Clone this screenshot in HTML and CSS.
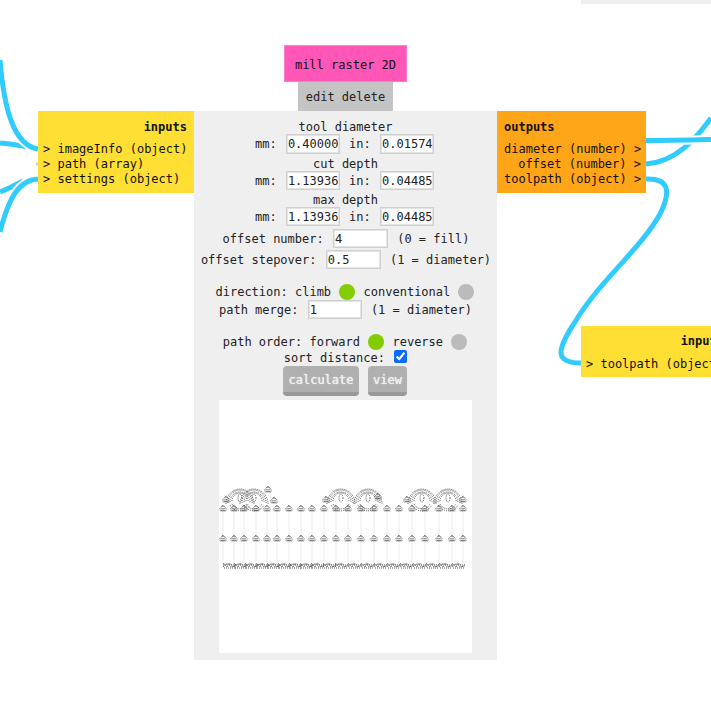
FILE: index.html
```html
<!DOCTYPE html>
<html lang="en">
<head>
<meta charset="utf-8">
<title>mill raster 2D</title>
<link rel="stylesheet" href="styles.css">
</head>
<body>
<main class="canvas">
  <svg class="wires" width="711" height="720" viewBox="0 0 711 720" aria-hidden="true">
    <path class="halo" d="M0 143 C10 144 20 146 30 148"/>
    <path class="wire" d="M0 143 C10 144 18 145 27 147"/>
    <path class="wire" d="M0 192 C8 189 15 185 23 181"/>
    <path class="halo" d="M0 60 C4 110 14 145 38 149"/>
    <path class="wire" d="M0 60 C4 110 14 145 38 149"/>
    <path class="halo" d="M0 232 C8 200 18 180 38 179"/>
    <path class="wire" d="M0 232 C8 200 18 180 38 179"/>
    <path class="wire-thin" d="M36 164 L38 164"/>
    <path class="wire" d="M646 164 C675 162 695 140 711 118"/>
    <path class="halo" d="M660 140.5 C680 140.5 695 140 711 139.5"/>
    <path class="wire" d="M646 140.5 C670 140.5 690 140 711 139.5"/>
    <path class="wire" d="M646 179 C668 178 672 190 660 214 C640 250 600 280 575 322 C555 352 556 363 581 363"/>
  </svg>

  <div class="tab">
    <div class="tab-name">mill raster 2D</div>
  </div>
  <div class="tab-actions">edit delete</div>

  <section class="ports ports-in">
    <h2 class="ports-title">inputs</h2>
    <div class="port">&gt; imageInfo (object)</div>
    <div class="port">&gt; path (array)</div>
    <div class="port">&gt; settings (object)</div>
  </section>

  <section class="panel">
    <div class="label">tool diameter</div>
    <div class="row row-20">mm: <input class="num" value="0.40000"> in: <input class="num" value="0.01574"></div>
    <div class="label">cut depth</div>
    <div class="row">mm: <input class="num" value="1.13936"> in: <input class="num" value="0.04485"></div>
    <div class="label">max depth</div>
    <div class="row">mm: <input class="num" value="1.13936"> in: <input class="num" value="0.04485"></div>
    <div class="row gap-3 nudge">offset number: <input class="w-55" value="4"> (0 = fill)</div>
    <div class="row gap-2 nudge">offset stepover: <input class="w-55" value="0.5"> (1 = diameter)</div>
    <div class="row row-16 gap-15">direction: climb <span class="dot on"></span> conventional <span class="dot"></span></div>
    <div class="row">path merge: <input class="w-54" value="1"> (1 = diameter)</div>
    <div class="row row-16 gap-15">path order: forward <span class="dot on"></span> reverse <span class="dot"></span></div>
    <div class="row row-16">sort distance: <input class="check" type="checkbox" checked></div>
    <div class="buttons">
      <button class="btn btn-calc" type="button">calculate</button>
      <button class="btn btn-view" type="button">view</button>
    </div>
    <svg class="preview" width="253" height="253" viewBox="0 0 253 253" aria-hidden="true">
      <defs>
        <filter id="soft" x="-5%" y="-5%" width="110%" height="110%"><feGaussianBlur stdDeviation="0.55"/></filter>
        <g id="blob"><path class="tp" d="M-3.5 1 L0 -3 L3.5 1 M-3.5 2 H3.5 M-1 -2 V3.5 M1 -2 V3.5 M-2.5 3 H2.5"/></g>
        <g id="low"><path class="tp" d="M-6 -2 L-2 2 L1 -2 L4 2 L7 -1 M-6 2 L-1 -2 L2 2 L7 1 M-6 0 H7 M-5 3 H6"/></g>
        <g id="ring">
          <ellipse class="tp" cx="0" cy="0" rx="2" ry="4"/>
          <path class="tp" d="M-8 3 A8 8 0 0 1 8 3 M-10 4 A10 10 0 0 1 10 4 M-12 5 A12 13 0 0 1 12 5 M-14 6 A14 15 0 0 1 14 6 M-8 6 A9 9 0 0 0 8 6 M-10 7 A11 10 0 0 0 10 7"/>
        </g>
      </defs>
      <g filter="url(#soft)">
        <path class="lines" d="M4 108V165M15 108V165M25 108V165M37 108V165M48 108V165M58 108V165M70 108V165M82 108V165M93 108V165M105 108V165M117 108V165M129 108V165M142 108V165M155 108V165M168 108V165M180 108V165M193 108V165M206 108V165M220 108V165M233 108V165M244 108V165"/>
        <use href="#ring" x="21" y="98"/><use href="#ring" x="35" y="98"/>
        <use href="#ring" x="122" y="98"/><use href="#ring" x="149" y="98"/>
        <use href="#ring" x="203" y="98"/><use href="#ring" x="229" y="98"/>
        <use href="#blob" x="7" y="99"/><use href="#blob" x="49" y="89"/><use href="#blob" x="55" y="100"/>
        <use href="#blob" x="107" y="99"/><use href="#blob" x="159" y="96"/>
        <use href="#blob" x="188" y="99"/><use href="#blob" x="244" y="99"/>

        <use href="#blob" x="4" y="108"/><use href="#blob" x="15" y="108"/><use href="#blob" x="25" y="108"/><use href="#blob" x="37" y="108"/><use href="#blob" x="48" y="108"/><use href="#blob" x="58" y="108"/><use href="#blob" x="70" y="108"/><use href="#blob" x="82" y="108"/><use href="#blob" x="93" y="108"/><use href="#blob" x="105" y="108"/><use href="#blob" x="117" y="108"/><use href="#blob" x="129" y="108"/><use href="#blob" x="142" y="108"/><use href="#blob" x="155" y="108"/><use href="#blob" x="168" y="108"/><use href="#blob" x="180" y="108"/><use href="#blob" x="193" y="108"/><use href="#blob" x="206" y="108"/><use href="#blob" x="220" y="108"/><use href="#blob" x="233" y="108"/><use href="#blob" x="244" y="108"/>

        <use href="#blob" x="4" y="138"/><use href="#blob" x="15" y="138"/><use href="#blob" x="25" y="138"/><use href="#blob" x="37" y="138"/><use href="#blob" x="48" y="138"/><use href="#blob" x="58" y="138"/><use href="#blob" x="70" y="138"/><use href="#blob" x="82" y="138"/><use href="#blob" x="93" y="138"/><use href="#blob" x="105" y="138"/><use href="#blob" x="117" y="138"/><use href="#blob" x="129" y="138"/><use href="#blob" x="142" y="138"/><use href="#blob" x="155" y="138"/><use href="#blob" x="168" y="138"/><use href="#blob" x="180" y="138"/><use href="#blob" x="193" y="138"/><use href="#blob" x="206" y="138"/><use href="#blob" x="220" y="138"/><use href="#blob" x="233" y="138"/><use href="#blob" x="244" y="138"/>

        <use href="#low" x="10" y="165"/><use href="#low" x="21" y="165"/><use href="#low" x="32" y="165"/><use href="#low" x="43" y="165"/><use href="#low" x="54" y="165"/><use href="#low" x="65" y="165"/><use href="#low" x="76" y="165"/><use href="#low" x="87" y="165"/><use href="#low" x="98" y="165"/><use href="#low" x="110" y="165"/><use href="#low" x="122" y="165"/><use href="#low" x="135" y="165"/><use href="#low" x="148" y="165"/><use href="#low" x="161" y="165"/><use href="#low" x="174" y="165"/><use href="#low" x="187" y="165"/><use href="#low" x="200" y="165"/><use href="#low" x="213" y="165"/><use href="#low" x="226" y="165"/><use href="#low" x="239" y="165"/>
      </g>
    </svg>
  </section>

  <section class="ports ports-out">
    <h2 class="ports-title">outputs</h2>
    <div class="port">diameter (number) &gt;</div>
    <div class="port">offset (number) &gt;</div>
    <div class="port">toolpath (object) &gt;</div>
  </section>

  <section class="ports ports-next">
    <h2 class="ports-title">inputs</h2>
    <div class="port">&gt; toolpath (object)</div>
  </section>

  <div class="stub"></div>
</main>
</body>
</html>
```
FILE: styles.css
```css
* { box-sizing: border-box; }

html, body {
  margin: 0;
  padding: 0;
  background: #fff;
  overflow: hidden;
}

.canvas {
  position: relative;
  width: 711px;
  height: 720px;
  overflow: hidden;
  font-family: "DejaVu Sans Mono", monospace;
  font-size: 12px;
  color: #111;
}

.wires {
  position: absolute;
  left: 0;
  top: 0;
}

.wire, .halo, .wire-thin {
  fill: none;
  stroke-linecap: butt;
}

.wire { stroke: #30ccff; stroke-width: 5; }
.halo { stroke: #fff; stroke-width: 9; }
.wire-thin { stroke: #9fe5ff; stroke-width: 3; }

.tab {
  position: absolute;
  left: 284px;
  top: 45px;
  width: 123px;
  height: 37px;
  padding-top: 2px;
  display: flex;
  align-items: center;
  justify-content: center;
  background: #ff56b8;
  border: 1px solid #ff7ecb;
}

.tab-actions {
  position: absolute;
  left: 298px;
  top: 82px;
  width: 95px;
  height: 29px;
  display: flex;
  align-items: center;
  justify-content: center;
  background: #c4c4c4;
  color: #222;
}

.ports {
  position: absolute;
  padding: 9px 7px 0 5px;
  line-height: 15px;
}

.port { white-space: pre; }

.ports-title {
  margin: 0 0 7px;
  font-size: 12px;
  line-height: 15px;
  font-weight: bold;
  text-align: right;
}

.ports-in, .ports-next {
  background: #ffdf33;
}

.ports-in {
  left: 38px;
  top: 111px;
  width: 156px;
  height: 82px;
}

.ports-next {
  left: 581px;
  top: 326px;
  width: 150px;
  height: 51px;
  padding-top: 8px;
}

.ports-next .ports-title { margin-bottom: 8px; }

.ports-out {
  left: 497px;
  top: 111px;
  width: 149px;
  height: 82px;
  padding: 9px 5px 0 7px;
  background: #ffa518;
  text-align: right;
}

.ports-out .ports-title { text-align: left; }

.panel {
  position: absolute;
  left: 194px;
  top: 111px;
  width: 303px;
  height: 549px;
  padding: 6px 0 7px;
  display: flex;
  flex-direction: column;
  align-items: center;
  background: #efefef;
  color: #222;
}

.label {
  height: 17px;
  line-height: 20px;
  text-align: center;
}

.row {
  height: 19px;
  display: flex;
  align-items: center;
  justify-content: center;
  white-space: pre;
}

.row-20 { height: 20px; }
.row-16 { height: 16px; }
.gap-2 { margin-top: 2px; }
.gap-3 { margin-top: 3px; }
.gap-15 { margin-top: 15px; }
.nudge { margin-left: 1px; }

input {
  margin: 0 2px;
  font: 12px "DejaVu Sans Mono", monospace;
  color: #222;
  background: #fff;
  border: 1px solid #cfcfcf;
  box-shadow: inset 0 0 0 1px #e4e4e4;
  border-radius: 0;
  padding: 0 0 0 1px;
  height: 100%;
}

.num { width: 54px; }
.w-55 { width: 55px; }
.w-54 { width: 54px; }

.check {
  width: 13px;
  height: 13px;
  margin: 0 0 3px 2px;
  padding: 0;
  border: 0;
  box-shadow: none;
  accent-color: #0a6cff;
}

.dot {
  display: inline-block;
  width: 16px;
  height: 16px;
  margin: 0 1px;
  border-radius: 50%;
  background: #bbb;
}

.dot.on { background: #83cc00; }

.buttons {
  display: flex;
  gap: 9px;
  height: 30px;
  margin-right: 1px;
}

.btn {
  height: 30px;
  padding: 2px 0 0;
  border: 0;
  border-bottom: 4px solid #999;
  border-radius: 4px;
  background: #b0b0b0;
  color: #f0f0f0;
  font: 12px "DejaVu Sans Mono", monospace;
  text-shadow: 0 0 1px #fff;
}

.btn-calc { width: 76px; }
.btn-view { width: 39px; }

.preview {
  display: block;
  margin-top: 4px;
  background: #fff;
  flex: none;
}

.tp {
  fill: none;
  stroke: #555;
  stroke-width: 1;
  stroke-dasharray: 1 1;
}

.lines {
  fill: none;
  stroke: #f2f2f2;
  stroke-width: 1.5;
}

.stub {
  position: absolute;
  left: 581px;
  top: 0;
  width: 130px;
  height: 4px;
  background: #eee;
}
```
